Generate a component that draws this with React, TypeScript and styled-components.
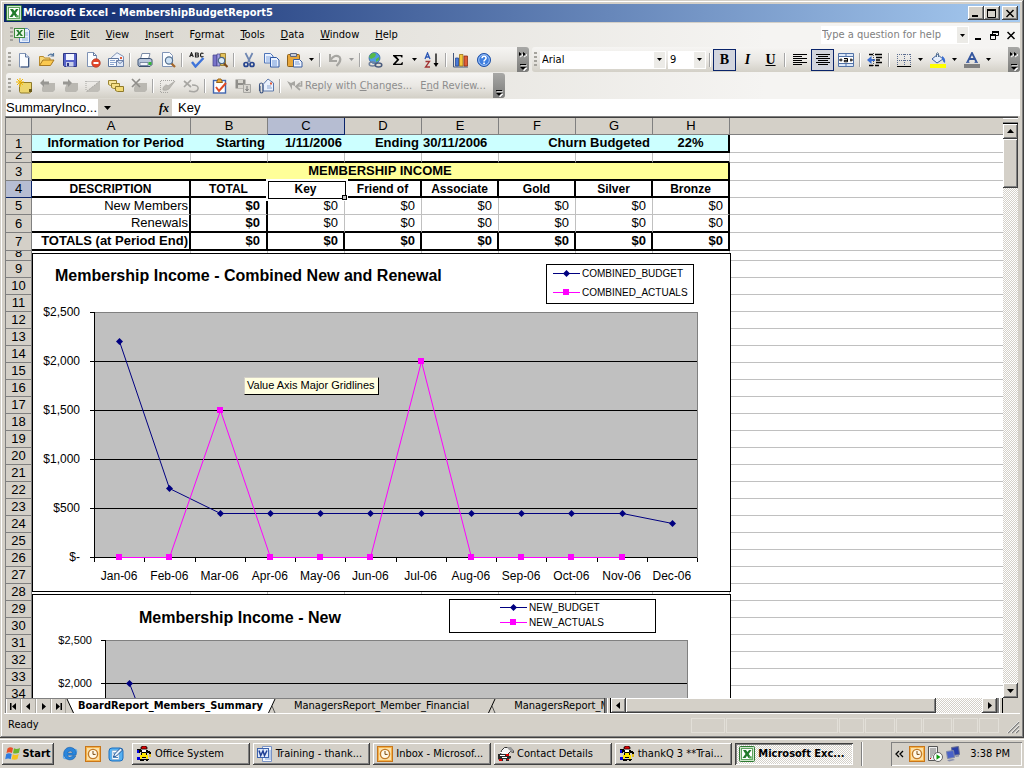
import React from 'react';
import styled, { createGlobalStyle, css } from 'styled-components';

const face = '#d4d0c8';
const uiFont = '"DejaVu Sans Condensed", "DejaVu Sans", sans-serif';
const cellFont = '"Liberation Sans", Arial, sans-serif';

const raised = css`
  background: ${face};
  box-shadow: inset -1px -1px #404040, inset 1px 1px #fff, inset -2px -2px #808080;
`;
const dither = css`
  background: repeating-conic-gradient(#fff 0 25%, ${face} 0 50%) 0 0 / 2px 2px;
`;

const Global = createGlobalStyle`
  *, *::before, *::after { box-sizing: border-box; }
  body { margin: 0; background: ${face}; font: 11px/14px ${uiFont}; color: #000; }
  button, input, select { font: inherit; color: inherit; border: 0; margin: 0; padding: 0; background: none; border-radius: 0; outline: none; }
  button { display: flex; align-items: center; justify-content: center; white-space: nowrap; }
  svg { display: block; flex: none; }
`;

const Screen = styled.div`
  display: flex;
  flex-direction: column;
  height: 100vh;
  min-height: 400px;
  overflow: hidden;
`;
const Window = styled.main`
  flex: 1;
  min-height: 0;
  display: flex;
  flex-direction: column;
  padding: 4px 4px 2px;
  background: ${face};
  box-shadow: inset -1px -1px #404040, inset 1px 1px ${face}, inset -2px -2px #808080, inset 2px 2px #fff;
`;

/* ---------- title bar ---------- */
const TitleBar = styled.header`
  display: flex;
  align-items: center;
  flex: none;
  height: 18px;
  padding: 0 2px;
  margin-bottom: 1px;
  background: linear-gradient(90deg, #0a246a, #a6caf0);
`;
const Title = styled.h1`
  flex: 1;
  margin: 0 0 0 1px;
  font: bold 11px/16px ${uiFont};
  color: #fff;
  white-space: nowrap;
`;
const CaptionButton = styled.button<{ $gap?: boolean }>`
  ${raised}
  width: 16px;
  height: 14px;
  margin-left: ${p => (p.$gap ? 2 : 0)}px;
`;

/* ---------- menus and toolbars ---------- */
const Chrome = styled.div`
  flex: none;
  background: linear-gradient(90deg, #d6d3ca, #f5f4f2 75%);
`;
const MenuBar = styled.nav`
  display: flex;
  align-items: center;
  height: 24px;
  padding-left: 4px;
`;
const MenuIcon = styled.span`
  margin: 0;
`;
const MenuItem = styled.button`
  height: 20px;
  padding: 0 8px;
`;
const Combo = styled.label`
  display: flex;
  background: #fff;
  height: 18px;
`;
const HelpCombo = styled(Combo)`
  width: 148px;
  margin-left: auto;
  border: 1px solid #fff;
`;
const TextInput = styled.input`
  flex: 1;
  min-width: 0;
  &::placeholder { color: #808080; opacity: 1; }
`;
const ComboArrow = styled.span`
  display: flex;
  align-items: center;
  justify-content: center;
  width: 11px;
  background: #ecebe7;
`;
const DocButton = styled.button`
  width: 17px;
  height: 18px;
`;
const ToolbarRow = styled.div`
  display: flex;
  height: 26px;
  padding: 0 0 1px 2px;
`;
const Toolbar = styled.div<{ $grow?: boolean }>`
  display: flex;
  align-items: center;
  flex: ${p => (p.$grow ? '1' : 'none')};
  height: 25px;
  margin-right: ${p => (p.$grow ? 0 : 3)}px;
  border-radius: 3px;
  background: linear-gradient(#f6f5f3, #eae8e4 50%, #d3d0c7);
  overflow: hidden;
`;
const Grip = styled.span`
  width: 3px;
  height: 16px;
  margin: 0 1px 0 2px;
  background: repeating-linear-gradient(#a5a39d 0 2px, transparent 2px 4px);
`;
const ToolButton = styled.button<{ $on?: boolean }>`
  width: 23px;
  height: 22px;
  ${p => p.$on && css`background: #d2d5de; border: 1px solid #0a246a;`}
`;
const ArrowButton = styled.button`
  width: 11px;
  height: 22px;
`;
const WideButton = styled.button`
  height: 22px;
  padding: 0 4px;
  color: #8d8d8d;
`;
const Separator = styled.span`
  width: 2px;
  height: 14px;
  margin: 0 2px;
  border-left: 1px solid #a6a6a6;
  border-right: 1px solid #fff;
`;
const Spacer = styled.span<{ $w: number }>`
  width: ${p => p.$w}px;
`;
const MoreButton = styled.button`
  width: 12px;
  height: 25px;
  margin-left: auto;
  background: linear-gradient(#a8a8a6, #7c7c7a);
`;
const ToolSelect = styled.select`
  appearance: none;
  flex: 1;
  padding-left: 1px;
`;
const ToolCombo = styled(Combo)<{ $w: number }>`
  width: ${p => p.$w}px;
  margin-left: 2px;
  border: 1px solid #fff;
`;

/* ---------- formula bar ---------- */
const FormulaBar = styled.div`
  display: flex;
  flex: none;
  height: 17px;
  padding-left: 2px;
  background: ${face};
  font: 13px/16px ${cellFont};
`;
const NameBox = styled.input`
  width: 92px;
  background: #fff;
`;
const NameArrow = styled.button`
  width: 18px;
`;
const FxButton = styled.button`
  flex: none;
  width: 56px;
  padding-right: 3px;
  justify-content: flex-end;
  font: italic bold 12px/14px "Liberation Serif", serif;
`;
const FormulaInput = styled.input`
  flex: 1;
  padding-left: 6px;
  background: #fff;
`;

/* ---------- worksheet ---------- */
const SheetArea = styled.section`
  display: flex;
  flex: 1;
  min-height: 0;
  margin: 0 2px 0 1px;
  border-top: 1px solid #808080;
  border-left: 1px solid #808080;
  box-shadow: inset 0 1px #404040;
  padding-top: 1px;
`;
const Sheet = styled.div`
  position: relative;
  flex: 1;
  min-width: 0;
  overflow: hidden;
  background: #fff;
`;
const Grid = styled.table`
  width: 100%;
  table-layout: fixed;
  border-collapse: separate;
  border-spacing: 0;
  font: 13px/14px ${cellFont};
`;
const Head = styled.th<{ $on?: boolean }>`
  padding: 0;
  font-weight: normal;
  background: ${p => (p.$on ? '#b6bdd2' : face)};
  border-right: 1px solid ${p => (p.$on ? '#0a246a' : '#808080')};
  border-bottom: 1px solid ${p => (p.$on ? '#0a246a' : '#808080')};
`;
const FillHead = styled(Head)`
  border-right: 0;
`;
const RowNumber = styled.div<{ $h: number }>`
  display: flex;
  align-items: ${p => (p.$h < 14 ? 'flex-end' : 'center')};
  justify-content: center;
  height: ${p => p.$h - 1}px;
  line-height: 14px;
  overflow: hidden;
`;
const Row = styled.tr<{ $h: number }>`
  height: ${p => p.$h}px;
`;
type Edge = 'thin' | 'thick' | 'none';
const edge = (e?: Edge) =>
  e === 'thick' ? '2px solid #000' : e === 'none' ? '0' : '1px solid #c0c0c0';
const Cell = styled.td<{ $r?: Edge; $b?: Edge; $bold?: boolean; $align?: string; $fill?: string; $pad?: number }>`
  position: relative;
  padding: 0 ${p => p.$pad ?? 1}px 0 1px;
  white-space: nowrap;
  border-right: ${p => edge(p.$r)};
  border-bottom: ${p => edge(p.$b)};
  font-weight: ${p => (p.$bold ? 'bold' : 'normal')};
  text-align: ${p => p.$align ?? 'right'};
  background: ${p => p.$fill ?? 'transparent'};
`;
const HeadingCell = styled(Cell)`
  font-size: 12px;
`;
const Selection = styled.span`
  position: absolute;
  z-index: 1;
  inset: 0 -3px -3px 0;
  border: 1px solid #000;
  box-shadow: 0 0 0 2px #fff, inset -2px -2px #fff;
  &::after {
    content: '';
    position: absolute;
    right: -2px;
    bottom: -2px;
    width: 5px;
    height: 5px;
    border: 1px solid #000;
    background: #c0c0c0;
  }
`;
const ChartFrame = styled.figure<{ $top: number }>`
  position: absolute;
  left: 26px;
  top: ${p => p.$top}px;
  width: 699px;
  margin: 0;
  border: 1px solid #000;
  background: #fff;
`;
const Tooltip = styled.div`
  position: absolute;
  left: 238px;
  top: 259px;
  padding: 0 3px 1px 2px;
  border: 1px solid #000;
  border-top-color: ${face};
  border-left-color: ${face};
  background: #ffffe1;
  font: 11px/15px "Liberation Sans", sans-serif;
  white-space: nowrap;
`;

/* ---------- scroll bars ---------- */
const VScroll = styled.div`
  display: flex;
  flex-direction: column;
  flex: none;
  width: 15px;
  ${dither}
`;
const ScrollButton = styled.button`
  ${raised}
  flex: none;
  width: 15px;
  height: 15px;
`;
const VSplit = styled.div`
  flex: none;
  height: 6px;
  background: ${face};
  border-bottom: 1px solid #000;
  box-shadow: inset 0 1px #fff, inset 0 -1px #808080;
`;
const VThumb = styled.div`
  ${raised}
  height: 49px;
  margin-bottom: auto;
`;
const BottomBar = styled.div`
  display: grid;
  grid-template-columns: minmax(0, 3fr) minmax(0, 2fr) 15px;
  flex: none;
  height: 15px;
  margin: 0 2px 0 1px;
  border-left: 1px solid #808080;
`;
const TabStrip = styled.div`
  display: flex;
  overflow: hidden;
  border-top: 1px solid #808080;
`;
const NavButton = styled.button`
  flex: none;
  width: 15px;
  height: 14px;
  box-shadow: inset -1px 0 #a8a59d, inset 1px 0 #fff;
`;
const Tab = styled.button<{ $on?: boolean }>`
  flex: none;
  height: 14px;
  padding: 0 ${p => (p.$on ? 4 : 18)}px;
  background: ${p => (p.$on ? '#fff' : face)};
  ${p => p.$on && css`font: bold 11px/13px ${uiFont}; margin-top: -1px; height: 15px;`}
`;
const HScroll = styled.div`
  display: flex;
  border-left: 1px solid #404040;
  ${dither}
`;
const HThumb = styled.div`
  ${raised}
  width: 78%;
  margin-right: auto;
`;
const HSplit = styled.div`
  flex: none;
  width: 6px;
  background: ${face};
  border-right: 1px solid #000;
  box-shadow: inset 2px 0 #808080, inset 3px 0 #fff;
`;

/* ---------- status bar ---------- */
const StatusBar = styled.footer`
  display: flex;
  align-items: center;
  flex: none;
  gap: 1px;
  height: 23px;
  padding-left: 4px;
  border-top: 1px solid #fff;
`;
const StatusText = styled.span`
  flex: 1;
`;
const StatusPanel = styled.span<{ $w: number }>`
  width: ${p => p.$w}px;
  height: 15px;
  border: 1px solid #e2dfd8;
`;

/* ---------- task bar ---------- */
const TaskBar = styled.nav`
  display: flex;
  align-items: center;
  flex: none;
  height: 30px;
  padding: 0 2px;
  border-top: 1px solid ${face};
  box-shadow: inset 0 1px #fff;
`;
const StartButton = styled.button`
  ${raised}
  width: 52px;
  height: 22px;
  gap: 1px;
  font: bold 11px/16px ${uiFont};
`;
const QuickLaunch = styled.div`
  display: flex;
  gap: 7px;
  margin: 0 8px;
`;
const TaskList = styled.div`
  display: flex;
  flex: 0 1 721px;
  min-width: 0;
  gap: 3px;
`;
const TaskButton = styled.button<{ $on?: boolean }>`
  ${raised}
  flex: 1 1 0;
  min-width: 0;
  justify-content: flex-start;
  height: 22px;
  padding: 0 4px;
  gap: 3px;
  ${p => p.$on && css`
    ${dither}
    box-shadow: inset 1px 1px #404040, inset -1px -1px #fff, inset 2px 2px #808080;
    font: bold 11px/14px ${uiFont};
  `}
`;
const TaskDivider = styled.span`
  width: 2px;
  height: 24px;
  margin-left: 8px;
  border-left: 1px solid #808080;
  border-right: 1px solid #fff;
`;
const Tray = styled.div`
  display: flex;
  align-items: center;
  gap: 2px;
  width: 131px;
  height: 24px;
  margin-left: auto;
  padding: 0 12px 0 4px;
  box-shadow: inset 1px 1px #808080, inset -1px -1px #fff;
`;
const Clock = styled.time`
  margin-left: auto;
  white-space: nowrap;
`;

/* ---------- icons ---------- */
const Svg = ({ children, size = 16 }: { children: React.ReactNode; size?: number }) => (
  <svg width={size} height={size} viewBox="0 0 16 16" aria-hidden="true">{children}</svg>
);
const Down = () => (
  <svg width="5" height="3" viewBox="0 0 5 3" aria-hidden="true"><path d="M0 0h5L2.500 3z" /></svg>
);
const DownGrey = () => (
  <svg width="5" height="3" viewBox="0 0 5 3" aria-hidden="true"><path d="M0 0h5L2.500 3z" fill="#999" /></svg>
);
const Tri = ({ d }: { d: string }) => (
  <svg width="9" height="9" viewBox="0 0 9 9" aria-hidden="true"><path d={d} /></svg>
);
const triUp = 'M1 6h7L4.500 2z';
const triDown = 'M1 3h7L4.500 7z';
const triLeft = 'M6 1v7L2 4.500z';
const triRight = 'M3 1v7l4-3.500z';

const ExcelIcon = () => (
  <Svg>
    <rect x=".5" y=".5" width="15" height="15" rx="1" fill="#cfe6cb" stroke="#2f7a33" />
    <rect x="2.500" y="2.500" width="11" height="11" fill="#fff" stroke="#5ea35e" />
    <path d="M4 4h3l1.500 2L10 4h2.500L9.700 8l3 4H9.500L8 9.800 6.500 12H3.500l3-4z" fill="#217a2b" />
    <path d="M10 10h4v4h-4z" fill="#6cb56c" opacity=".6" />
  </Svg>
);
const WorkbookIcon = () => (
  <Svg>
    <path d="M5.500 1.500h8l2 2v12h-10z" fill="#e6eefc" stroke="#5a7fbd" />
    <path d="M11 6h3M11 8h3M8 11h6M8 13h6" stroke="#8fb0dd" />
    <rect x=".5" y="1.500" width="10" height="9" fill="#eaf5e8" stroke="#3c8a3c" />
    <path d="M2 3h2.500L5.500 5 7 3h2L6.500 6 9 9H6.700L5.400 7.200 4 9H2l2.300-3z" fill="#217a2b" />
  </Svg>
);
const WordIcon = () => (
  <Svg>
    <path d="M5.500.5h9v15h-9z" fill="#f3f7ff" stroke="#7a93c4" />
    <path d="M12 5h2M12 7h2M8 11h6M8 13h6M12 9h2" stroke="#7fa2d8" />
    <rect x=".5" y="2.500" width="11" height="9" fill="#dfe9fb" stroke="#3b62ad" />
    <path d="M2 4.500l1.700 5L6 5l1.500 4.500L10 4.500" fill="none" stroke="#1f3f94" strokeWidth="1.500" />
  </Svg>
);
const OutlookIcon = () => (
  <Svg>
    <rect x=".5" y=".5" width="15" height="15" fill="#f6b34a" stroke="#c8761a" />
    <rect x="2" y="2" width="12" height="12" fill="#fbe0a8" />
    <circle cx="8" cy="8" r="4.600" fill="#fff8e6" stroke="#c07a28" strokeWidth="1.400" />
    <path d="M8 5v3.400h2.600" fill="none" stroke="#7a4a10" />
  </Svg>
);
const FigureIcon = () => (
  <Svg>
    <path d="M6 0h4v1h1v2H5V1h1z" fill="#e00000" stroke="#000" strokeWidth=".7" />
    <path d="M1 3h4v1h7v1h2v1h1v4h-1v1h-1V7h-2V6H4v1H1z" />
    <path d="M6 4h4v2H6z" fill="#fff" />
    <path d="M5.500 6.500h5v5h-5z" fill="#ffe600" stroke="#000" />
    <path d="M4 9h2v4H4zM10 9h2v4h-2z" fill="#ffe600" />
    <path d="M1 4h2v3H1zM1 11h3v3H1z" fill="#0000e0" />
    <path d="M13 8h2v3h-2z" fill="#e8c020" />
    <path d="M4 13h9v1h-1v1h-2v-1H8v1H4z" />
  </Svg>
);
const ContactIcon = () => (
  <Svg>
    <path d="M3.500 4.500l3-3h5l4 3v2l-3-1-3 3h-7z" fill="#f4f4f4" stroke="#333" />
    <path d="M9 1h4l3 4-2 1-4-3z" fill="#999" />
    <path d="M0 8h9l1 2h3v2l-2 1v2H2l-2-2z" fill="#2a2a2a" />
    <path d="M2 6h6v1H2zM2 9h5v1H2zM4 11h5v1H4z" fill="#fff" />
    <path d="M8 8h3v2H8zM1 13h3v2H1zM9 13h2v1H9z" fill="#e00000" />
    <path d="M5 13h3v2H5z" fill="#ccc" />
  </Svg>
);
const IEIcon = () => (
  <Svg>
    <ellipse cx="8" cy="8" rx="7.500" ry="3.200" fill="none" stroke="#63aef0" strokeWidth="1.300" transform="rotate(-30 8 8)" />
    <path d="M14 9.200H5.500a2.700 2.700 0 0 0 4.900 1h3.300A6.300 6.300 0 1 1 14.200 8.500zM5.600 7h5a2.600 2.600 0 0 0-5 0z" fill="#2a86dc" stroke="#0d4f9b" strokeWidth=".5" />
  </Svg>
);
const DesktopIcon = () => (
  <Svg>
    <rect x="1" y="2" width="14" height="13" rx="3" fill="#56b1f2" stroke="#1b6fc0" />
    <path d="M4 4.500h7v9H4z" fill="#fff" stroke="#89a9c8" strokeWidth=".6" />
    <path d="M5.500 11l1-3 6-6 2 2-6 6z" fill="#e6f2fd" stroke="#1c4f90" />
    <path d="M5 7h3M5 11.500h5" stroke="#4d86c0" />
  </Svg>
);
const FlagIcon = () => (
  <Svg>
    <path d="M2.500 2.500q2.500-2 5.500-.5L7 7Q4.500 5.500 1.500 7z" fill="#e8502a" />
    <path d="M9 2.300Q11.500 3.600 15 2L13.900 6.800Q11.500 8.200 8 7.200z" fill="#6cb52d" />
    <path d="M1.200 8Q4 6.600 6.700 8L5.700 13.300Q3.200 11.800.2 13.300z" fill="#2f7de0" />
    <path d="M7.800 8.300Q10.500 9.600 13.700 8L12.500 13Q10 14.400 6.700 13.300z" fill="#f7c21e" />
  </Svg>
);
const TrayServerIcon = () => (
  <Svg>
    <path d="M1.500.5h9v14h-9z" fill="#eee" stroke="#555" />
    <path d="M3 3h6M3 5h6M3 7h6M3 9h3M3 11h2" stroke="#777" />
    <path d="M3 12h1v1H3z" fill="#c00" />
    <circle cx="11" cy="11" r="4.500" fill="#fff" stroke="#444" strokeWidth=".8" />
    <path d="M9.500 8.300v5.400l4-2.700z" fill="#0a9a0a" />
  </Svg>
);
const NetworkIcon = () => (
  <Svg>
    <path d="M6.500 1.500l7-1 1 8-7 1z" fill="#2a3fa8" stroke="#6a6f90" />
    <path d="M1.500 5.500l7-1 1 7-7 1z" fill="#4a62c8" stroke="#8088a8" />
    <path d="M2 14l6-1 2 1-6 1.500zM10 10l4-1v1.500l-3 .5z" fill="#8a90ac" />
  </Svg>
);

const grey = '#a7a6a2';
const icons: Record<string, React.ReactNode> = {
  'New': <Svg><path d="M3.500 1.500h6l3.500 3.500v10h-9.500z" fill="#fbfdff" stroke="#7f93b5" /><path d="M9.500 1.500v3.500H13" fill="#dce6f5" stroke="#5f779f" /><path d="M12.500 6v9H5" stroke="#3f5780" fill="none" /></Svg>,
  'Open': <Svg><path d="M.5 13.500v-9h4l1 1.500h5.500v2" fill="#f7d777" stroke="#b98a2b" /><path d="M.5 13.500L4 8h11l-3.500 5.500z" fill="#fbc94f" stroke="#a87820" /><path d="M9 4q2-3 5-1M14.500 1v3h-3" fill="none" stroke="#54779f" strokeWidth="1.200" /></Svg>,
  'Save': <Svg><path d="M1.500 1.500h13v13h-12l-1-1z" fill="#5763c9" stroke="#2d3785" /><path d="M4 2h8v6H4z" fill="#f1f4ff" /><path d="M4 10h7.500v4.500H4z" fill="#c9cfe9" /><path d="M5 11h2v3H5z" fill="#2d3785" /></Svg>,
  'Permission': <Svg><path d="M2.500.5h6l3 3v11h-9z" fill="#fbfdff" stroke="#7f93b5" /><path d="M8.500.5v3h3" fill="none" stroke="#5f779f" /><circle cx="11" cy="11" r="4.300" fill="#e2472b" stroke="#a52c17" strokeWidth=".6" /><path d="M8.500 10h5v2h-5z" fill="#fff" /></Svg>,
  'E-mail': <Svg><path d="M3.500 5.500L9 .7l6.500 3.800v6h-12z" fill="#eef3fc" stroke="#7f93b5" /><path d="M.5 6.500h10v8H.5z" fill="#f8fbff" stroke="#5f779f" /><path d="M2 8.500h5M2 10.500h6M2 12.500h4" stroke="#8aa4cf" /><path d="M8.500 8.500h7v6h-7z" fill="#dfe8f7" stroke="#6d83ab" /><path d="M8.500 8.500l3.500 3 3.500-3" fill="none" stroke="#6d83ab" /><path d="M12 5h2v2h-2z" fill="#e05a38" /></Svg>,
  'Print': <Svg><path d="M5 1.500h8L11.500 7h-8z" fill="#fff" stroke="#7a8aa5" /><path d="M1 7.500l2-1h10l2 1v5l-2 2H2l-1-1.500z" fill="#b9c7dc" stroke="#3b5172" /><path d="M3 10.500h8v3H3z" fill="#f3f6fb" stroke="#56698a" strokeWidth=".7" /><path d="M11.500 10h3v3h-3z" fill="#38b438" /></Svg>,
  'Print preview': <Svg><path d="M2.500.5h7l3 3v11h-10z" fill="#fbfdff" stroke="#7f93b5" /><path d="M11 11l4 4" stroke="#a5672b" strokeWidth="2.300" /><circle cx="9" cy="8.500" r="3.600" fill="#cfe3f6" stroke="#55708f" strokeWidth="1.200" /></Svg>,
  'Spelling': <Svg><path d="M.7 5L2.500.8 4.300 5M1.300 3.500h2.400M6.500 1v4h2a1 1 0 0 0 0-2h-2 1.800a1 1 0 0 0 0-2zM14.500 1.500q-3-1.200-3 1.500t3 1.500" fill="none" stroke="#222" strokeWidth="1.200" /><path d="M3 10l3.500 4.500L14.500 6" fill="none" stroke="#3f74d9" strokeWidth="2.400" /></Svg>,
  'Research': <Svg><path d="M1 3h4v11H1z" fill="#7873c9" stroke="#444087" strokeWidth=".7" /><path d="M5 2h3v12H5z" fill="#a9a6e8" stroke="#444087" strokeWidth=".7" /><path d="M8.500 1.500h5v12h-5z" fill="#e5c35b" stroke="#8a6d1e" strokeWidth=".8" /><path d="M11.500 11l4 4" stroke="#7d4a1d" strokeWidth="2.200" /><circle cx="9.500" cy="8.500" r="3.200" fill="#d9ebf9" stroke="#4c6788" strokeWidth="1.200" /></Svg>,
  'Cut': <Svg><path d="M4.500 1l4.500 9M11.500 1L7 10" stroke="#6e86b2" strokeWidth="1.700" /><circle cx="5" cy="12.500" r="2" fill="none" stroke="#27458f" strokeWidth="1.700" /><circle cx="11" cy="12.500" r="2" fill="none" stroke="#27458f" strokeWidth="1.700" /></Svg>,
  'Copy': <Svg><path d="M.5 1.500h6l2.500 2.500v7H.5z" fill="#eaf2ff" stroke="#4e74b8" /><path d="M2 5h5M2 7h5M2 9h4" stroke="#86a8de" /><path d="M6.500 5.500h6l2.500 2.500v7H6.500z" fill="#eaf2ff" stroke="#2f58a4" /><path d="M8 9h5M8 11h5M8 13h5" stroke="#6f96d6" /></Svg>,
  'Paste': <Svg><rect x=".5" y="2.500" width="12" height="12" rx="1" fill="#e7a63a" stroke="#8d611c" /><path d="M3.500 1.500h6v3h-6z" fill="#c9ced9" stroke="#5d6780" /><path d="M6.500 7.500h6l2.500 2.500v5H6.500z" fill="#eef4ff" stroke="#3c5f9f" /><path d="M8 10h4M8 12h5" stroke="#7f9fd4" /></Svg>,
  'Undo': <Svg><path d="M3 2v7h7" fill="none" stroke={grey} strokeWidth="2" /><path d="M3.500 8Q8 1.500 12.500 5q2.500 4-3 9" fill="none" stroke={grey} strokeWidth="2.200" /></Svg>,
  'Hyperlink': <Svg><circle cx="7.500" cy="6" r="5.500" fill="#4f9be0" stroke="#2b5d9a" strokeWidth=".7" /><path d="M4 2q3-2 5 0l-1 3-4 2-2-2zM9 7l3-2v3l-3 2z" fill="#58b947" /><ellipse cx="5.500" cy="12" rx="3.300" ry="2" fill="none" stroke="#71819c" strokeWidth="1.500" /><ellipse cx="11.500" cy="13" rx="3.300" ry="2" fill="none" stroke="#4a5b7c" strokeWidth="1.500" /></Svg>,
  'AutoSum': <Svg><path d="M3 3h9.500v2.500h-1L10.500 4.200H6.300L9.300 7.700 5.500 11.700h5.300l1.200-1.500h1L12.500 13H3v-1l4-4.200L3 4z" /></Svg>,
  'Sort ascending': <Svg><path d="M1 7l2.500-6L6 7M2 5h3" fill="none" stroke="#2d58b5" strokeWidth="1.300" /><path d="M1.500 9.500h4L1.500 15H6" fill="none" stroke="#a23535" strokeWidth="1.300" /><path d="M12 1.500V13" stroke="#000" strokeWidth="1.300" /><path d="M9.500 11h5L12 15z" /></Svg>,
  'Chart wizard': <Svg><path d="M.5 1v14H15" fill="none" stroke="#44587d" /><path d="M2.500 6h3v8h-3z" fill="#4a7ad6" stroke="#264a95" strokeWidth=".8" /><path d="M6.500 2.500h3.500V14H6.500z" fill="#f4c83d" stroke="#99711a" strokeWidth=".8" /><path d="M11 4h3.500v10H11z" fill="#df5d38" stroke="#8c2f17" strokeWidth=".8" /></Svg>,
  'Help': <Svg><circle cx="8" cy="8" r="6.500" fill="#3f7fe0" stroke="#1e4fa5" /><circle cx="8" cy="8" r="5.300" fill="none" stroke="#bcd6fa" strokeWidth=".8" /><path d="M6 6.300q.2-2 2.100-2t2 1.800q0 1.100-1.100 1.700T8 9.500" fill="none" stroke="#fff" strokeWidth="1.500" /><path d="M7.200 10.500h1.700v1.600H7.200z" fill="#fff" /></Svg>,
  'New comment': <Svg><path d="M4.500 4.500h11v9l-2 1.500h-9l-1-1.500v-5z" fill="#ecd56e" stroke="#8f7a2a" /><path d="M13 11h3v3h-3z" fill="#6b5a1a" /><path d="M4 0v9M0 4h8M1 1l6 6M7 1L1 7" stroke="#f2b705" /></Svg>,
  'Previous comment': <Svg><path d="M5 5h11v7l-2 2H4l-1-1v-3z" fill="#bab8b2" /><path d="M1 5l4-4v2.500h5v3H5V9z" fill="#989793" /></Svg>,
  'Next comment': <Svg><path d="M5 5h11v7l-2 2H4l-1-1v-3z" fill="#bab8b2" /><path d="M10 5L6 1v2.500H1v3h5V9z" fill="#989793" /></Svg>,
  'Show comment': <Svg><path d="M.5 3.500h14M1 3v10" fill="none" stroke={grey} strokeDasharray="1 1" /><path d="M15 3v9l-2 2H1z" fill="#bfbdb7" /><path d="M15 3L1 14" stroke={grey} strokeDasharray="2 1" /></Svg>,
  'Show all comments': <Svg><path d="M.5 2.500h8v5h-6l-2-1z" fill="#f7e59b" stroke="#9a8430" /><path d="M3.500 5.500h8v5h-6l-2-1z" fill="#f5df85" stroke="#9a8430" /><path d="M7.500 8.500h8v5h-6l-2-1z" fill="#f3da74" stroke="#8f7a2a" /></Svg>,
  'Delete comment': <Svg><path d="M5 5h11v7l-2 2H4l-1-1v-3z" fill="#bab8b2" /><path d="M1 1l8 8M9 1L1 9" stroke="#8f8e8a" strokeWidth="1.700" /></Svg>,
  'Show ink': <Svg><path d="M1 2.500h14M1 14.500h8M.5 3v11" stroke={grey} strokeDasharray="1 1" /><path d="M3 10q3-5 5-2l7-5-6 8q-3 2-6 1z" fill="#bbb9b3" stroke={grey} strokeWidth=".7" /></Svg>,
  'Delete ink': <Svg><path d="M1 3l7 6M8 2L1 9" stroke={grey} strokeWidth="1.700" /><path d="M6 13q8 2 9-2t-6-4" fill="none" stroke={grey} strokeWidth="1.500" /></Svg>,
  'Create task': <Svg><rect x="1.500" y="2.500" width="12" height="12.500" fill="#fff" stroke="#4066b0" strokeWidth="1.400" /><path d="M4.500 4.500L6 1h3l1.500 3.500z" fill="#e6a834" stroke="#9a6418" /><path d="M4 9l3 4 7-8" fill="none" stroke="#dd4a24" strokeWidth="2" /></Svg>,
  'Update file': <Svg><path d="M.5 1.500h10v9H.5z" fill="#8f8e8a" /><path d="M3 2h5v3H3zM3 7h5v3H3z" fill="#d8d6d0" /><path d="M8.500 6.500h7v8h-7z" fill="#d8d6d0" stroke={grey} /><path d="M12 8v4M10.500 11l1.500 2 1.500-2" stroke="#777" fill="none" /></Svg>,
  'Mail attachment': <Svg><path d="M5 6.500L10 1l5.500 4v8H5z" fill="#eaf1fc" stroke="#5d78ab" /><path d="M9 8h4M9 10h5" stroke="#8aa4cf" /><path d="M12 4.500h2v2h-2z" fill="#e05a38" /><path d="M1.500 13V7q0-2 1.700-2T5 7v6q0 2-1.500 2t-1.500-2V8" fill="none" stroke="#3f5682" strokeWidth="1.100" /></Svg>,
  'Align left': <Svg><path d="M1 2.500h14M1 4.500h9M1 6.500h14M1 8.500h9M1 10.500h14M1 12.500h9" stroke="#000" /></Svg>,
  'Center': <Svg><path d="M1 2.500h14M3 4.500h10M1 6.500h14M3 8.500h10M1 10.500h14M3 12.500h10" stroke="#000" /></Svg>,
  'Merge and center': <Svg><path d="M.5 1.500h15v13H.5z" fill="#dce8f8" stroke="#5273a8" /><path d="M.5 4.500h15M.5 11.500h15M8 1.500v3M8 11.500v3" stroke="#5273a8" /><path d="M1 5h14v6H1z" fill="#fff" /><path d="M1 8h3.500M12 8h3M3 6.500v3M13 6.500v3" stroke="#000" /><path d="M6 6.500h3.500v3.300H6.300V8.300H9" fill="none" stroke="#000" /></Svg>,
  'Decrease indent': <Svg><path d="M2 2.500h4M8 2.500h7M9 5.500h6M9 8h4M9 10.500h6M2 13.500h4M8 13.500h4" stroke="#000" strokeWidth="1.300" /><path d="M4.500 4v8L0 8z" fill="#3c6fd1" /><path d="M4 8h4" stroke="#3c6fd1" strokeWidth="2" /><path d="M6.500 1v14" stroke="#555" strokeDasharray="1 1" /></Svg>,
  'Borders': <Svg><path d="M1 2.500h14M1 8.500h14M1.500 2v11M8.500 2v11M14.500 2v11" stroke="#5c6e90" strokeDasharray="1 1" /><path d="M1 14.500h14" stroke="#000" /></Svg>,
  'Fill color': <Svg><path d="M2 7l5.500-4.500L13 7l-6 4z" fill="#e6effb" stroke="#3c5f9f" /><path d="M6.500 5V1.500q1.500-1.500 2 0V5" fill="none" stroke="#55708f" /><path d="M12 4q4 2 3 7-2-1-3-4z" fill="#3c6fd1" /><path d="M0 12h16v4H0z" fill="#ff0" /></Svg>,
  'Font color': <Svg><path d="M3.500 10L8 1l4.500 9M5.500 7h5" fill="none" stroke="#34569e" strokeWidth="1.800" /><path d="M2 10.300h3.500M10.500 10.300H14" stroke="#34569e" /><path d="M0 12h16v4H0z" fill="#808080" /></Svg>,
  'Reply': <Svg><path d="M0 3l4 2 4-2v5L5 7v5L3 8z" fill={grey} /><path d="M14.500 3v5h-5M13 5L9 8.500l4 3.500" fill="none" stroke={grey} strokeWidth="1.700" /></Svg>,
};

const Tool = ({ name, on }: { name: string; on?: boolean }) => (
  <ToolButton type="button" aria-label={name} aria-pressed={on} $on={on}>{icons[name]}</ToolButton>
);
const Tools = ({ names }: { names: string[] }) => (
  <>
    {names.map((n, i) =>
      n === '|' ? <Separator key={i} />
        : n === 'v' ? <ArrowButton key={i} type="button" aria-label="More choices"><Down /></ArrowButton>
          : n === 'x' ? <ArrowButton key={i} type="button" aria-label="More choices"><DownGrey /></ArrowButton>
            : <Tool key={i} name={n} />
    )}
  </>
);
const More = ({ chevrons }: { chevrons?: boolean }) => (
  <MoreButton type="button" aria-label="Toolbar options">
    <svg width="10" height="22" viewBox="0 0 10 22" aria-hidden="true">
      {chevrons && <path d="M1 3l3 2-3 2M5 3l3 2-3 2" fill="none" stroke="#fff" transform="translate(1 1)" />}
      {chevrons && <path d="M1 3l3 2-3 2zM5 3l3 2-3 2z" />}
      <path d="M3 16.500h6M4 19h5l-3 3z" fill="#fff" stroke="#fff" strokeWidth=".6" />
      <path d="M2 15.500h6" stroke="#000" /><path d="M2 18h6l-3 3z" />
    </svg>
  </MoreButton>
);
const Letter = styled.span<{ $italic?: boolean; $under?: boolean }>`
  font: bold 14px/16px "Liberation Serif", serif;
  font-style: ${p => (p.$italic ? 'italic' : 'normal')};
  text-decoration: ${p => (p.$under ? 'underline' : 'none')};
`;

/* ---------- charts ---------- */
const months = ['Jan', 'Feb', 'Mar', 'Apr', 'May', 'Jun', 'Jul', 'Aug', 'Sep', 'Oct', 'Nov', 'Dec'];
const navy = '#000080';
const pink = '#ff00ff';
type Plot = { x: number; y: number; w: number; h: number };
const Series = ({ plot, values, color, square }: { plot: Plot; values: number[]; color: string; square?: boolean }) => {
  const pts = values.map((v, i) => [
    Math.round(plot.x + (plot.w / 12) * (i + 0.5)) + 0.5,
    Math.round(plot.y + plot.h - (v * plot.h) / 2500) + 0.5,
  ]);
  return (
    <g>
      <polyline points={pts.map(p => p.join(',')).join(' ')} fill="none" stroke={color} />
      {pts.map(([x, y], i) => square
        ? <rect key={i} x={x - 3.5} y={y - 3.5} width="6" height="6" fill={color} />
        : <path key={i} d={`M${x - 3.5} ${y}l3.500-3.500 3.500 3.500-3.500 3.500z`} fill={color} />)}
    </g>
  );
};
const PlotArea = ({ plot, font }: { plot: Plot; font: number }) => (
  <g>
    <rect x={plot.x + 0.5} y={plot.y + 0.5} width={plot.w} height={plot.h} fill="#c0c0c0" stroke="#808080" />
    {[0, 1, 2, 3, 4, 5].map(n => {
      const y = plot.y + (plot.h / 5) * n;
      return (
        <g key={n}>
          <path d={`M${plot.x - 4} ${Math.round(y) + 0.5}h${n ? plot.w + 4 : 4}`} stroke="#000" />
          <text x={plot.x - (font > 11 ? 14 : 13)} y={y + 4} textAnchor="end" fontSize={font}>
            {['$2,500', '$2,000', '$1,500', '$1,000', '$500', '$-'][n]}
          </text>
        </g>
      );
    })}
    <path d={`M${plot.x + 0.5} ${plot.y}v${plot.h}`} stroke="#000" />
  </g>
);
const Legend = ({ x, y, w, h, textX, gap, names }: { x: number; y: number; w: number; h: number; textX: number; gap: number; names: string[] }) => (
  <g>
    <rect x={x + 0.5} y={y + 0.5} width={w} height={h} fill="#fff" stroke="#000" />
    {names.map((n, i) => {
      const cy = y + (gap > 16 ? 9 : 8) + gap * i;
      return (
        <g key={n}>
          <path d={`M${textX - 29} ${cy + 0.5}h27`} stroke={i ? pink : navy} />
          {i ? <rect x={textX - 19} y={cy - 3} width="6" height="6" fill={pink} />
            : <path d={`M${textX - 19} ${cy + 0.5}l3.500-3.500 3.500 3.500-3.500 3.500z`} fill={navy} />}
          <text x={textX} y={cy + 4} fontSize="10">{n}</text>
        </g>
      );
    })}
  </g>
);
const combined: Plot = { x: 61, y: 58, w: 603, h: 245 };
const fresh: Plot = { x: 72, y: 45, w: 582, h: 216 };
const CombinedChart = () => (
  <svg width="697" height="337" viewBox="0 0 697 337" fontFamily={cellFont} role="img" aria-label="Membership income, combined new and renewal">
    <text x="22" y="27" fontSize="16" fontWeight="bold">Membership Income - Combined New and Renewal</text>
    <Legend x={513} y={10} w={147} h={39} textX={549} gap={19} names={['COMBINED_BUDGET', 'COMBINED_ACTUALS']} />
    <PlotArea plot={combined} font={12} />
    {months.map((m, i) => (
      <g key={m}>
        <path d={`M${Math.round(combined.x + 50.25 * (i + 1)) + 0.5} 304v4`} stroke="#000" />
        <text x={combined.x + 50.25 * (i + 0.5)} y="326" fontSize="12" textAnchor="middle">{m}-06</text>
      </g>
    ))}
    <path d="M61.500 304v4" stroke="#000" />
    <Series plot={combined} color={navy} values={[2200, 700, 450, 450, 450, 450, 450, 450, 450, 450, 450, 350]} />
    <Series plot={combined} color={pink} square values={[0, 0, 1500, 0, 0, 0, 2000, 0, 0, 0, 0]} />
  </svg>
);
const NewChart = () => (
  <svg width="697" height="310" viewBox="0 0 697 310" fontFamily={cellFont} role="img" aria-label="Membership income, new">
    <text x="106" y="28" fontSize="16" fontWeight="bold">Membership Income - New</text>
    <Legend x={416} y={4} w={206} h={33} textX={496} gap={15} names={['NEW_BUDGET', 'NEW_ACTUALS']} />
    <PlotArea plot={fresh} font={11} />
    <Series plot={fresh} color={navy} values={[2000, 550, 450, 450, 450, 450, 450, 450, 450, 450, 450, 350]} />
  </svg>
);

/* ---------- worksheet rows ---------- */
const letters = ['A', 'B', 'C', 'D', 'E', 'F', 'G', 'H'];
const six = [0, 1, 2, 3, 4, 5];
const aqua = '#ccffff';
const yellow = '#ffff99';
const SheetRow = ({ n, h, on, children }: { n: number; h: number; on?: boolean; children: React.ReactNode }) => (
  <Row $h={h}>
    <Head scope="row" $on={on}><RowNumber $h={h}>{n}</RowNumber></Head>
    {children}
    <Cell $r="none" />
  </Row>
);
const MoneyRow = ({ n, h, label, total }: { n: number; h: number; label: string; total?: boolean }) => {
  const bottom: Edge = n > 5 ? 'thick' : 'thin';
  return (
    <SheetRow n={n} h={h}>
      <Cell $r="thick" $b={bottom} $bold={total}>{label}</Cell>
      <Cell $r="thick" $b={bottom} $bold $pad={6}>$0</Cell>
      {six.map(i => (
        <Cell key={i} $r={total || i === 5 ? 'thick' : 'thin'} $b={bottom} $bold={total} $pad={total || i === 5 ? 5 : 6}>$0</Cell>
      ))}
    </SheetRow>
  );
};
const Worksheet = () => (
  <Grid>
    <colgroup>
      <col style={{ width: 26 }} />
      <col style={{ width: 159 }} />
      {letters.slice(1).map(l => <col key={l} style={{ width: 77 }} />)}
      <col />
    </colgroup>
    <thead>
      <Row $h={17}>
        <Head />
        {letters.map(l => <Head key={l} scope="col" $on={l === 'C'}>{l}</Head>)}
        <FillHead />
      </Row>
    </thead>
    <tbody>
      <SheetRow n={1} h={18}>
        <Cell $fill={aqua} $r="none" $b="thick" $bold $pad={7}>Information for Period</Cell>
        <Cell $fill={aqua} $r="none" $b="thick" $bold $pad={3}>Starting</Cell>
        <Cell $fill={aqua} $r="none" $b="thick" $bold $pad={3}>1/11/2006</Cell>
        <Cell $fill={aqua} $r="none" $b="thick" $bold $pad={3}>Ending</Cell>
        <Cell $fill={aqua} $r="none" $b="thick" $bold $align="left">30/11/2006</Cell>
        <Cell $fill={aqua} $r="none" $b="thick" $bold $pad={3} colSpan={2}>Churn Budgeted</Cell>
        <Cell $fill={aqua} $r="thick" $b="thick" $bold $align="center">22%</Cell>
      </SheetRow>
      <SheetRow n={2} h={10}>{letters.map(l => <Cell key={l} $b="thick" />)}</SheetRow>
      <SheetRow n={3} h={18}>
        <Cell colSpan={8} $fill={yellow} $r="thick" $b="thick" $bold $align="center">MEMBERSHIP INCOME</Cell>
      </SheetRow>
      <SheetRow n={4} h={17} on>
        {['DESCRIPTION', 'TOTAL', 'Key', 'Friend of', 'Associate', 'Gold', 'Silver', 'Bronze'].map(t => (
          <HeadingCell key={t} $r="thick" $b="thick" $bold $align="center">{t}{t === 'Key' && <Selection />}</HeadingCell>
        ))}
      </SheetRow>
      <MoneyRow n={5} h={17} label="New Members" />
      <MoneyRow n={6} h={18} label="Renewals" />
      <MoneyRow n={7} h={18} label="TOTALS (at Period End)" total />
      <SheetRow n={8} h={10}>{letters.map(l => <Cell key={l} />)}</SheetRow>
      {Array.from({ length: 26 }, (_, i) => (
        <SheetRow key={i} n={i + 9} h={17}>{letters.map(l => <Cell key={l} />)}</SheetRow>
      ))}
    </tbody>
  </Grid>
);

const menus: [string, string, string][] = [
  ['', 'F', 'ile'], ['', 'E', 'dit'], ['', 'V', 'iew'], ['', 'I', 'nsert'], ['F', 'o', 'rmat'],
  ['', 'T', 'ools'], ['', 'D', 'ata'], ['', 'W', 'indow'], ['', 'H', 'elp'],
];
const tasks: [React.ReactNode, string][] = [
  [<FigureIcon />, 'Office System'], [<WordIcon />, 'Training - thank...'], [<OutlookIcon />, 'Inbox - Microsof...'],
  [<ContactIcon />, 'Contact Details'], [<FigureIcon />, 'thankQ 3 **Trai...'], [<ExcelIcon />, 'Microsoft Exc...'],
];

export default function App() {
  return (
    <Screen>
      <Global />
      <Window>
        <TitleBar>
          <ExcelIcon />
          <Title>Microsoft Excel - MembershipBudgetReport5</Title>
          <CaptionButton type="button" aria-label="Minimize"><svg width="10" height="9" viewBox="0 0 10 9"><path d="M1 6h6v2H1z" /></svg></CaptionButton>
          <CaptionButton type="button" aria-label="Maximize"><svg width="10" height="9" viewBox="0 0 10 9"><path d="M.5 1h8v7.500h-8z" fill="none" stroke="#000" /><path d="M0 0h9v2H0z" /></svg></CaptionButton>
          <CaptionButton type="button" aria-label="Close" $gap><svg width="10" height="9" viewBox="0 0 10 9"><path d="M1.500 1l7 7M8.500 1l-7 7" stroke="#000" strokeWidth="1.500" /></svg></CaptionButton>
        </TitleBar>
        <Chrome>
          <MenuBar>
            <Grip />
            <MenuIcon><WorkbookIcon /></MenuIcon>
            {menus.map(([a, u, b]) => <MenuItem key={u + b} type="button"><span>{a}<u>{u}</u>{b}</span></MenuItem>)}
            <HelpCombo>
              <TextInput aria-label="Type a question for help" placeholder="Type a question for help" />
              <ComboArrow><Down /></ComboArrow>
            </HelpCombo>
            <DocButton type="button" aria-label="Minimize workbook"><svg width="9" height="9" viewBox="0 0 9 9"><path d="M2 7h6v2H2z" /></svg></DocButton>
            <DocButton type="button" aria-label="Restore workbook"><svg width="9" height="9" viewBox="0 0 9 9"><path d="M2.500 3V.5h6v4H6M.5 3.500h5v5h-5z" fill="none" stroke="#000" /><path d="M2 0h7v2H2zM0 3h6v2H0z" /></svg></DocButton>
            <DocButton type="button" aria-label="Close workbook"><svg width="9" height="9" viewBox="0 0 9 9"><path d="M.5 1l7 7M7.500 1l-7 7" stroke="#000" strokeWidth="1.500" /></svg></DocButton>
          </MenuBar>
          <ToolbarRow>
            <Toolbar>
              <Grip />
              <Tools names={['New', 'Open', 'Save', 'Permission', 'E-mail', '|', 'Print', 'Print preview', '|', 'Spelling', 'Research', '|', 'Cut', 'Copy', 'Paste', 'v', '|', 'Undo', 'x', '|', 'Hyperlink', 'AutoSum', 'v', 'Sort ascending', '|', 'Chart wizard', 'Help']} />
              <Spacer $w={22} />
              <More chevrons />
            </Toolbar>
            <Toolbar $grow>
              <Grip />
              <ToolCombo $w={126}>
                <ToolSelect aria-label="Font"><option>Arial</option></ToolSelect>
                <ComboArrow><Down /></ComboArrow>
              </ToolCombo>
              <ToolCombo $w={38}>
                <ToolSelect aria-label="Font size"><option>9</option></ToolSelect>
                <ComboArrow><Down /></ComboArrow>
              </ToolCombo>
              <Spacer $w={1} />
              <Separator />
              <ToolButton type="button" aria-label="Bold" aria-pressed $on><Letter>B</Letter></ToolButton>
              <ToolButton type="button" aria-label="Italic"><Letter $italic>I</Letter></ToolButton>
              <ToolButton type="button" aria-label="Underline"><Letter $under>U</Letter></ToolButton>
              <Separator />
              <Tool name="Align left" />
              <Tool name="Center" on />
              <Tools names={['Merge and center', '|', 'Decrease indent', '|', 'Borders', 'v', 'Fill color', 'v', 'Font color', 'v']} />
              <More chevrons />
            </Toolbar>
          </ToolbarRow>
          <ToolbarRow>
            <Toolbar>
              <Grip />
              <Tools names={['New comment', 'Previous comment', 'Next comment', 'Show comment', 'Show all comments', 'Delete comment', '|', 'Show ink', 'Delete ink', '|', 'Create task', 'Update file', 'Mail attachment', '|']} />
              <WideButton type="button">{icons.Reply}<Spacer $w={2} /><span>Reply with <u>C</u>hanges...</span></WideButton>
              <WideButton type="button"><span>E<u>n</u>d Review...</span></WideButton>
              <Spacer $w={3} />
              <More />
            </Toolbar>
          </ToolbarRow>
        </Chrome>
        <FormulaBar>
          <NameBox aria-label="Name box" defaultValue="SummaryInco..." />
          <NameArrow type="button" aria-label="Names"><svg width="7" height="4" viewBox="0 0 7 4"><path d="M0 0h7L3.500 4z" /></svg></NameArrow>
          <FxButton type="button" aria-label="Insert function">fx</FxButton>
          <FormulaInput aria-label="Formula" defaultValue="Key" />
        </FormulaBar>
        <SheetArea>
          <Sheet>
            <Worksheet />
            <ChartFrame $top={135}><CombinedChart /></ChartFrame>
            <ChartFrame $top={476}><NewChart /></ChartFrame>
            <Tooltip role="tooltip">Value Axis Major Gridlines</Tooltip>
          </Sheet>
          <VScroll>
            <VSplit />
            <ScrollButton type="button" aria-label="Scroll up"><Tri d={triUp} /></ScrollButton>
            <VThumb />
            <ScrollButton type="button" aria-label="Scroll down"><Tri d={triDown} /></ScrollButton>
          </VScroll>
        </SheetArea>
        <BottomBar>
          <TabStrip>
            <NavButton type="button" aria-label="First sheet"><Tri d="M1 1h1.500v7H1zM7 1v7L3 4.500z" /></NavButton>
            <NavButton type="button" aria-label="Previous sheet"><Tri d={triLeft} /></NavButton>
            <NavButton type="button" aria-label="Next sheet"><Tri d={triRight} /></NavButton>
            <NavButton type="button" aria-label="Last sheet"><Tri d="M6.500 1H8v7H6.500zM2 1v7l4-3.500z" /></NavButton>
            <svg width="8" height="14" viewBox="0 0 8 14"><path d="M1 0l7 14V0z" fill="#fff" /><path d="M1 0l6.500 14" stroke="#000" /></svg>
            <Tab type="button" $on>BoardReport_Members_Summary</Tab>
            <svg width="9" height="14" viewBox="0 0 9 14"><path d="M0 0h8L2 14H0z" fill="#fff" /><path d="M8 0L1.500 14" stroke="#000" /><path d="M5 7l3 7" stroke="#555" /></svg>
            <Tab type="button">ManagersReport_Member_Financial</Tab>
            <svg width="9" height="14" viewBox="0 0 9 14"><path d="M8 0L1.500 14" stroke="#000" /><path d="M5 7l3 7" stroke="#555" /></svg>
            <Tab type="button">ManagersReport_M</Tab>
          </TabStrip>
          <HScroll>
            <HSplit />
            <ScrollButton type="button" aria-label="Scroll left"><Tri d={triLeft} /></ScrollButton>
            <HThumb />
            <ScrollButton type="button" aria-label="Scroll right"><Tri d={triRight} /></ScrollButton>
            <HSplit />
          </HScroll>
        </BottomBar>
        <StatusBar>
          <StatusText>Ready</StatusText>
          {[34, 112, 25, 30, 26, 29, 25, 20].map((w, i) => <StatusPanel key={i} $w={w} />)}
          <svg width="20" height="18" viewBox="0 0 20 18"><path d="M8 17L19 6M12 17l7-7M16 17l3-3" stroke="#808080" strokeWidth="1.500" /><path d="M7 17L19 5M11 17l8-8M15 17l4-4" stroke="#fff" strokeWidth=".7" /></svg>
        </StatusBar>
      </Window>
      <TaskBar>
        <StartButton type="button"><FlagIcon />Start</StartButton>
        <QuickLaunch><IEIcon /><OutlookIcon /><DesktopIcon /></QuickLaunch>
        <TaskList>
          {tasks.map(([icon, label], i) => <TaskButton key={label} type="button" $on={i === 5}>{icon}{label}</TaskButton>)}
        </TaskList>
        <TaskDivider />
        <Tray>
          <svg width="9" height="8" viewBox="0 0 9 8"><path d="M4 1L1 4l3 3M8 1L5 4l3 3" fill="none" stroke="#000" strokeWidth="1.300" /></svg>
          <Spacer $w={1} />
          <OutlookIcon /><TrayServerIcon /><NetworkIcon />
          <Clock>3:38 PM</Clock>
        </Tray>
      </TaskBar>
    </Screen>
  );
}
